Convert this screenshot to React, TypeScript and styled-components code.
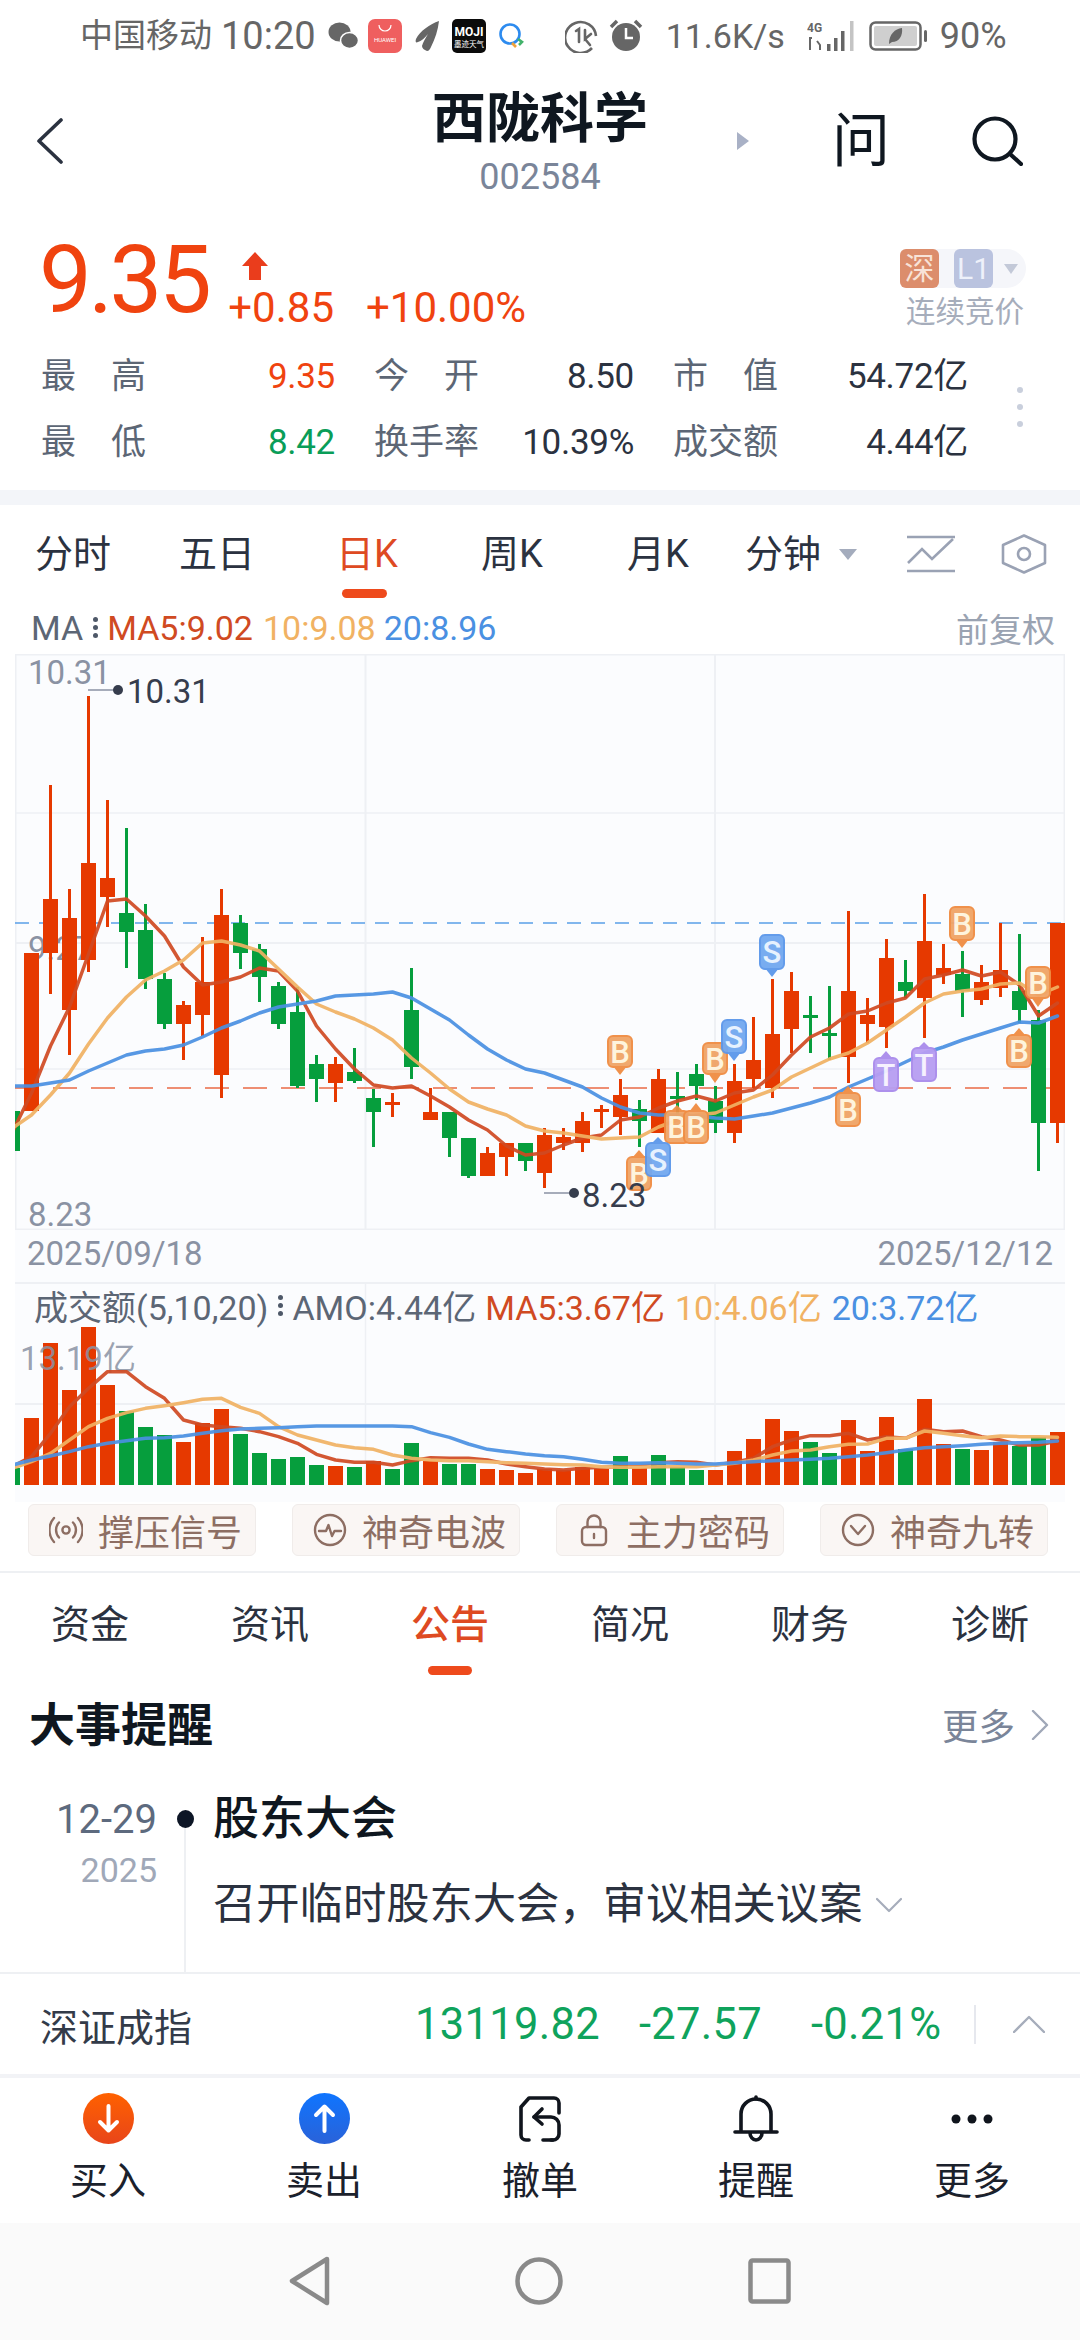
import React from "react";
import styled, { createGlobalStyle } from "styled-components";

const GlobalStyle = createGlobalStyle`
  html, body { margin: 0; padding: 0; background: #fff; }
  body { width: 1080px; height: 2340px; overflow: hidden; font-family: Roboto, "Noto Sans CJK SC", sans-serif; }
  * { box-sizing: border-box; }
`;

const RED = "#e63900";
const GREEN = "#069e3d";
const MA5 = "#d04a22";
const MA10 = "#f1b263";
const MA20 = "#4a90e2";

const Page = styled.div`
  width: 1080px;
  height: 2340px;
  display: flex;
  flex-direction: column;
  background: #fff;
  overflow: hidden;
`;

/* ---------- system status bar ---------- */
const StatusBar = styled.div`
  height: 72px;
  flex: none;
  display: flex;
  align-items: center;
  padding-left: 80px;
  color: #666;
`;
const StatusText = styled.span<{ $size?: number; $left?: number }>`
  font-size: ${(p) => p.$size ?? 33}px;
  line-height: 40px;
  margin-left: ${(p) => p.$left ?? 0}px;
  white-space: nowrap;
`;
const StatusIcon = styled.svg<{ $left: number }>`
  flex: none;
  margin-left: ${(p) => p.$left}px;
`;

/* ---------- stock title ---------- */
const Header = styled.div`
  height: 153px;
  flex: none;
  display: grid;
  grid-template-columns: 1fr 212px 1fr;
  align-items: start;
`;
const BackCell = styled.div`
  padding: 46px 0 0 36px;
`;
const TitleCell = styled.div`
  display: flex;
  flex-direction: column;
  align-items: center;
  padding-top: 19px;
`;
const StockName = styled.div`
  font-size: 54px;
  line-height: 58px;
  font-weight: 700;
  color: #0f1720;
  white-space: nowrap;
`;
const StockCode = styled.div`
  font-size: 36px;
  line-height: 40px;
  margin-top: 8px;
  color: #7a8599;
`;
const ActionCell = styled.div`
  display: flex;
  align-items: flex-start;
  padding: 40px 0 0 91px;
`;
const Caret = styled.div`
  width: 0;
  height: 0;
  margin-top: 20px;
  border-left: 12px solid #a9b1c6;
  border-top: 9px solid transparent;
  border-bottom: 9px solid transparent;
`;
const AskGlyph = styled.div`
  font-size: 58px;
  line-height: 58px;
  color: #0f1720;
  margin-left: 83px;
`;
const SearchWrap = styled.div`
  margin: 4px 0 0 81px;
`;

/* ---------- quote ---------- */
const QuoteTop = styled.div`
  height: 119px;
  flex: none;
  display: flex;
  padding-left: 39px;
  align-items: flex-start;
`;
const BigPrice = styled.div`
  font-size: 94px;
  line-height: 110px;
  letter-spacing: -3.5px;
  color: #f0430f;
`;
const ChangeBlock = styled.div`
  display: flex;
  flex-direction: column;
  margin-left: 20px;
  padding-top: 27px;
`;
const ChangeRow = styled.div`
  display: flex;
  gap: 32px;
  margin-top: 6px;
  font-size: 42px;
  line-height: 44px;
  color: #f0430f;
`;
const MarketBlock = styled.div`
  margin: 0 54px 0 auto;
  width: 126px;
  padding-top: 24px;
  display: flex;
  flex-direction: column;
`;
const BadgeRow = styled.div`
  display: flex;
  align-items: center;
  width: 126px;
  height: 39px;
  background: #f5f6fa;
  border-radius: 8px 20px 20px 8px;
`;
const Badge = styled.span<{ $bg: string; $fg: string }>`
  width: 39px;
  height: 39px;
  border-radius: 6px;
  background: ${(p) => p.$bg};
  color: ${(p) => p.$fg};
  font-size: 30px;
  line-height: 39px;
  text-align: center;
  margin-right: 15px;
`;
const BadgeCaret = styled.span`
  width: 0;
  height: 0;
  margin-left: -4px;
  border-top: 10px solid #c3c9d8;
  border-left: 7px solid transparent;
  border-right: 7px solid transparent;
`;
const MarketState = styled.div`
  font-size: 29.5px;
  line-height: 34px;
  margin: 7px 0 0 6px;
  color: #a6adbb;
  white-space: nowrap;
`;

const StatsWrap = styled.div`
  height: 146px;
  flex: none;
  display: flex;
  padding-left: 41px;
`;
const StatsGrid = styled.div`
  display: grid;
  grid-template-columns: 294px 260px 295px;
  grid-auto-rows: 66px;
  column-gap: 39px;
`;
const StatCell = styled.div`
  display: flex;
  justify-content: space-between;
  align-items: center;
  white-space: nowrap;
`;
const StatLabel = styled.span`
  width: 105px;
  font-size: 35px;
  line-height: 44px;
  color: #5c6675;
  text-align-last: justify;
`;
const StatValue = styled.span<{ $color?: string }>`
  font-size: 35px;
  line-height: 44px;
  letter-spacing: -0.3px;
  color: ${(p) => p.$color ?? "#2b3240"};
`;
const MoreDots = styled.div`
  display: flex;
  flex-direction: column;
  gap: 11px;
  margin: 43px 0 0 49px;
`;
const MoreDot = styled.span`
  width: 6px;
  height: 6px;
  border-radius: 50%;
  background: #c9cfdc;
`;

const Band = styled.div`
  height: 15px;
  flex: none;
  background: #f3f5f9;
`;

/* ---------- period tabs ---------- */
const PeriodTabs = styled.div`
  height: 100px;
  flex: none;
  display: grid;
  grid-template-columns: 146px 142px 158px 132px 160px 90px 79px 94px 46px;
  align-items: center;
  padding-bottom: 2px;
`;
const PeriodTab = styled.div<{ $active?: boolean }>`
  position: relative;
  text-align: center;
  font-size: 38px;
  line-height: 48px;
  color: ${(p) => (p.$active ? "#de4a22" : "#2b3240")};
  ${(p) =>
    p.$active &&
    `&::after {
      content: "";
      position: absolute;
      left: 50%;
      top: 59px;
      width: 45px;
      height: 9px;
      margin-left: -25px;
      border-radius: 5px;
      background: #ee4a1c;
    }`}
`;
const TabCaret = styled.div`
  width: 0;
  height: 0;
  margin-left: 11px;
  border-top: 11px solid #a4acbd;
  border-left: 9px solid transparent;
  border-right: 9px solid transparent;
`;

const LegendRow = styled.div`
  height: 49px;
  flex: none;
  display: flex;
  align-items: center;
  padding: 0 25px 4px 31px;
  font-size: 34px;
  white-space: nowrap;
`;
const LegendName = styled.span`
  color: #5c6675;
`;
const LegendDots = styled.span`
  display: inline-flex;
  flex-direction: column;
  gap: 3px;
  margin: 0 9px 0 10px;
`;
const LegendDot = styled.i`
  width: 5px;
  height: 5px;
  border-radius: 50%;
  background: #4e5868;
`;
const LegendValue = styled.span<{ $color: string; $left?: number }>`
  color: ${(p) => p.$color};
  margin-left: ${(p) => p.$left ?? 0}px;
`;
const Adjust = styled.span`
  margin-left: auto;
  font-size: 33px;
  color: #9aa3b2;
`;

/* ---------- charts ---------- */
const ChartFrame = styled.div`
  flex: none;
  width: 1050px;
  margin-left: 15px;
  background: #fbfcfe;
`;
const CandleSvg = styled.svg`
  display: block;
  font-family: Roboto, "Noto Sans CJK SC", sans-serif;
`;
const DateRow = styled.div`
  height: 52px;
  display: flex;
  justify-content: space-between;
  align-items: center;
  padding: 0 12px 6px 12px;
  font-size: 33px;
  color: #8a92a3;
`;
const VolumePanel = styled.div`
  position: relative;
  height: 220px;
`;
const VolumeLegend = styled.div`
  position: absolute;
  left: 19px;
  top: 1px;
  display: flex;
  align-items: center;
  height: 44px;
  font-size: 34px;
  white-space: nowrap;
`;

/* ---------- signal chips ---------- */
const ChipRow = styled.div`
  height: 71px;
  flex: none;
  display: flex;
  gap: 36px;
  padding: 2px 28px 0;
  border-bottom: 2px solid #eef0f3;
`;
const Chip = styled.div`
  width: 228px;
  height: 52px;
  display: flex;
  align-items: center;
  gap: 15px;
  padding-left: 20px;
  background: #faf6f4;
  border: 1px solid #f0ecea;
  border-radius: 6px;
  font-size: 36px;
  color: #8d6e63;
  white-space: nowrap;
`;

/* ---------- section tabs ---------- */
const SectionTabs = styled.div`
  height: 108px;
  flex: none;
  display: grid;
  grid-template-columns: repeat(6, 180px);
  padding-top: 28px;
`;
const SectionTab = styled.div<{ $active?: boolean }>`
  position: relative;
  text-align: center;
  font-size: 39px;
  line-height: 48px;
  height: 48px;
  color: ${(p) => (p.$active ? "#de4a22" : "#2b3240")};
  font-weight: ${(p) => (p.$active ? 500 : 400)};
  ${(p) =>
    p.$active &&
    `&::after {
      content: "";
      position: absolute;
      left: 50%;
      top: 65px;
      width: 44px;
      height: 9px;
      margin-left: -22px;
      border-radius: 5px;
      background: #ee4a1c;
    }`}
`;

const EventsHeader = styled.div`
  height: 86px;
  flex: none;
  display: flex;
  align-items: center;
  padding: 1px 31px 0 29px;
`;
const EventsTitle = styled.div`
  font-size: 46px;
  line-height: 52px;
  font-weight: 700;
  color: #0f1720;
`;
const EventsMore = styled.div`
  margin-left: auto;
  display: flex;
  align-items: center;
  gap: 16px;
  font-size: 36.5px;
  color: #7a8599;
`;

const EventRow = styled.div`
  height: 207px;
  flex: none;
  display: grid;
  grid-template-columns: 157px 56px 1fr;
  border-bottom: 2px solid #eef0f3;
`;
const EventDate = styled.div`
  display: flex;
  flex-direction: column;
  align-items: flex-end;
  padding-top: 29px;
`;
const EventDay = styled.div`
  font-size: 40px;
  line-height: 48px;
  color: #5d6a7e;
`;
const EventYear = styled.div`
  font-size: 34px;
  line-height: 40px;
  margin-top: 6px;
  color: #a0a8b8;
`;
const Timeline = styled.div`
  display: flex;
  flex-direction: column;
  align-items: center;
  padding-top: 43px;
`;
const TimelineDot = styled.span`
  width: 17px;
  height: 18px;
  border-radius: 50%;
  background: #0d1626;
  flex: none;
`;
const TimelineLine = styled.span`
  width: 2px;
  flex: 1;
  background: #eef0f3;
`;
const EventBody = styled.div`
  padding-top: 23px;
`;
const EventTitle = styled.div`
  font-size: 46px;
  line-height: 56px;
  font-weight: 500;
  color: #0f1720;
`;
const EventDesc = styled.div`
  display: flex;
  align-items: center;
  margin-top: 31px;
  font-size: 43.3px;
  line-height: 56px;
  color: #2b3240;
  white-space: nowrap;
`;

const IndexRow = styled.div`
  height: 104px;
  flex: none;
  display: flex;
  align-items: center;
  padding-left: 40px;
  border-bottom: 4px solid #f2f3f6;
  white-space: nowrap;
`;
const IndexName = styled.div`
  width: 375px;
  font-size: 38px;
  color: #333b49;
`;
const IndexFigure = styled.div<{ $width: number }>`
  width: ${(p) => p.$width}px;
  font-size: 43.5px;
  letter-spacing: 0.3px;
  color: #0fa35c;
`;
const IndexDivider = styled.div`
  width: 2px;
  height: 39px;
  background: #e6e8ee;
  margin-left: 27px;
`;
const IndexToggle = styled.div`
  margin-left: 37px;
  display: flex;
`;

/* ---------- trade actions ---------- */
const ActionBar = styled.div`
  height: 145px;
  flex: none;
  display: grid;
  grid-template-columns: repeat(5, 216px);
`;
const ActionItem = styled.div`
  display: flex;
  flex-direction: column;
  align-items: center;
  padding-top: 15px;
`;
const ActionIcon = styled.div`
  width: 51px;
  height: 51px;
  display: flex;
  align-items: center;
  justify-content: center;
`;
const ActionLabel = styled.div`
  margin-top: 13px;
  font-size: 38px;
  line-height: 48px;
  color: #1b212c;
`;

const NavBar = styled.div`
  flex: 1;
  display: flex;
  justify-content: center;
  align-items: flex-start;
  gap: 185px;
  padding-top: 33px;
  background: #fafafa;
`;

/* ---------- chart data: [colour, wick top, wick bottom, body top, body bottom] in page pixels ---------- */
type Candle = ["r" | "g", number, number, number, number];
const candles: Candle[] = [
  ["g", 1111, 1151, 1111, 1151], ["r", 953, 1111, 953, 1111], ["r", 785, 994, 899, 953], ["r", 889, 1055, 918, 1010],
  ["r", 696, 972, 863, 960], ["r", 800, 927, 878, 897], ["g", 828, 968, 913, 932], ["g", 904, 989, 930, 979],
  ["g", 973, 1029, 979, 1024], ["r", 1001, 1060, 1005, 1024], ["r", 937, 1036, 982, 1015], ["r", 889, 1098, 915, 1075],
  ["g", 915, 969, 923, 953], ["g", 944, 1002, 949, 977], ["g", 982, 1029, 986, 1024], ["g", 987, 1088, 1012, 1086],
  ["g", 1055, 1102, 1064, 1079], ["r", 1057, 1102, 1064, 1083], ["g", 1048, 1083, 1072, 1081], ["g", 1089, 1147, 1098, 1112],
  ["r", 1093, 1117, 1102, 1105], ["g", 968, 1079, 1010, 1067], ["r", 1088, 1120, 1112, 1120], ["g", 1112, 1157, 1112, 1138],
  ["g", 1138, 1178, 1138, 1176], ["r", 1147, 1176, 1153, 1176], ["r", 1143, 1176, 1143, 1157], ["g", 1143, 1171, 1143, 1161],
  ["r", 1128, 1188, 1135, 1173], ["r", 1128, 1150, 1137, 1143], ["r", 1112, 1152, 1121, 1143], ["r", 1105, 1128, 1109, 1112],
  ["r", 1079, 1135, 1095, 1117], ["g", 1100, 1147, 1109, 1121], ["r", 1069, 1133, 1079, 1133], ["g", 1072, 1117, 1096, 1099],
  ["g", 1064, 1100, 1074, 1086], ["g", 1086, 1133, 1101, 1123], ["r", 1064, 1143, 1081, 1133], ["r", 1017, 1088, 1060, 1079],
  ["r", 979, 1098, 1034, 1088], ["r", 972, 1053, 991, 1029], ["g", 996, 1053, 1015, 1017], ["g", 986, 1060, 1033, 1035],
  ["r", 911, 1083, 991, 1057], ["r", 998, 1043, 1015, 1024], ["r", 939, 1048, 958, 1027], ["g", 960, 998, 982, 991],
  ["r", 894, 1038, 941, 998], ["r", 944, 984, 968, 975], ["g", 951, 1017, 974, 991], ["r", 965, 1005, 982, 1000],
  ["r", 923, 997, 970, 988], ["g", 934, 1023, 991, 1010], ["g", 1010, 1171, 1020, 1123], ["r", 923, 1143, 923, 1123],
];

const ma5 = [1132,1093,1046,1007,954,901,899,916,936,967,985,982,977,968,971,991,1026,1049,1069,1085,1088,1086,1096,1107,1120,1130,1146,1155,1153,1145,1138,1135,1120,1117,1108,1101,1096,1101,1093,1090,1075,1055,1037,1028,1014,1011,1003,998,979,975,970,976,972,985,1016,1003];
const ma10 = [1128,1115,1095,1073,1044,1018,997,980,971,960,943,941,945,951,969,987,1004,1012,1019,1028,1040,1058,1073,1089,1102,1109,1115,1126,1131,1133,1136,1139,1138,1137,1127,1120,1115,1113,1105,1097,1090,1077,1068,1059,1053,1043,1030,1017,1003,994,991,989,984,983,995,987];
const ma20 = [1086,1086,1083,1080,1071,1063,1055,1051,1049,1045,1037,1028,1021,1013,1007,1004,1001,996,995,994,992,998,1009,1020,1035,1049,1060,1069,1073,1080,1087,1098,1107,1113,1115,1115,1116,1118,1119,1116,1113,1108,1103,1097,1087,1079,1071,1062,1053,1047,1040,1034,1028,1022,1023,1016];

const volumeHeights = [17,67,142,95,158,100,74,58,50,43,62,76,51,32,26,28,20,19,18,24,16,42,24,21,21,16,15,12,16,15,18,16,29,17,30,18,15,15,34,46,66,54,43,32,65,34,68,36,86,41,36,35,43,39,48,53];
const volumeUp = "0111110001110000010100100111111101000111110011101101100" + "1";

// Amount averages, measured at three units per pixel above y = 1270.
const amount5 = [590,560,490,410,355,305,305,350,385,450,465,470,475,485,500,520,553,570,577,577,585,572,563,565,565,570,582,590,597,600,595,592,590,585,578,575,577,585,577,565,530,510,497,497,490,510,500,505,478,485,483,500,510,525,525,513];
const amount10 = [595,575,550,510,470,445,428,415,407,398,388,385,412,430,470,495,510,525,533,538,555,565,570,572,572,575,578,580,582,584,585,590,592,592,590,590,590,585,580,570,555,543,540,530,523,522,505,505,483,490,497,503,498,500,500,502];
const amount20 = [585,570,558,545,530,520,512,505,503,498,490,482,477,475,473,470,468,468,468,468,468,470,488,502,522,538,545,552,557,560,568,577,580,580,578,580,582,582,578,575,572,570,568,565,560,555,548,540,533,530,527,523,520,518,517,513];

const slotX = (i: number) => 12.5 + 19 * i;
const linePoints = (ys: number[]) => ys.map((y, i) => `${slotX(i)},${y}`).join(" ");

type Marker = { x: number; tip: number; top: number; bottom: number; label: "B" | "S" | "T" };
const markers: Marker[] = [
  { x: 620, tip: 1075, top: 1036, bottom: 1067, label: "B" },
  { x: 848, tip: 1086, top: 1093, bottom: 1126, label: "B" },
  { x: 886, tip: 1051, top: 1058, bottom: 1091, label: "T" },
  { x: 924, tip: 1042, top: 1048, bottom: 1081, label: "T" },
  { x: 1019, tip: 1028, top: 1035, bottom: 1067, label: "B" },
  { x: 962, tip: 948, top: 907, bottom: 940, label: "B" },
  { x: 1038, tip: 1007, top: 967, bottom: 998, label: "B" },
  { x: 677, tip: 1105, top: 1111, bottom: 1143, label: "B" },
  { x: 696, tip: 1103, top: 1111, bottom: 1143, label: "B" },
  { x: 639, tip: 1150, top: 1157, bottom: 1190, label: "B" },
  { x: 658, tip: 1137, top: 1143, bottom: 1176, label: "S" },
  { x: 715, tip: 1083, top: 1043, bottom: 1074, label: "B" },
  { x: 734, tip: 1061, top: 1020, bottom: 1053, label: "S" },
  { x: 772, tip: 977, top: 935, bottom: 969, label: "S" },
];
const markerTheme = {
  B: { fill: "#f0a466", edge: "#f08c42", ink: "#fff4dc" },
  S: { fill: "#72a8f0", edge: "#5b97ea", ink: "#e6f2ff" },
  T: { fill: "#b79ef2", edge: "#a98bec", ink: "#f6f1ff" },
};

function TradeMarker({ x, tip, top, bottom, label }: Marker) {
  const t = markerTheme[label];
  const pointer = tip > bottom ? `${x - 7},${bottom - 1} ${x},${tip} ${x + 7},${bottom - 1}` : `${x - 7},${top + 1} ${x},${tip} ${x + 7},${top + 1}`;
  return (
    <g opacity={0.95}>
      <polygon points={pointer} fill={t.edge} />
      <rect x={x - 12} y={top} width={24} height={bottom - top} rx={5} fill={t.fill} stroke={t.edge} strokeWidth={2} />
      <text x={x} y={(top + bottom) / 2 + 11} fontSize={31} fontWeight={500} textAnchor="middle" fill={t.ink}>
        {label}
      </text>
    </g>
  );
}

function CandleChart() {
  return (
    <CandleSvg width={1050} height={576} viewBox="15 654 1050 576">
      <g stroke="#eef0f4" fill="none">
        <rect x={15.5} y={654.5} width={1049} height={575} strokeWidth={2} />
        <line x1={15} x2={1065} y1={813} y2={813} strokeWidth={1.5} />
        <line x1={15} x2={1065} y1={943} y2={943} strokeWidth={2} />
        <line x1={15} x2={1065} y1={1069} y2={1069} strokeWidth={1.5} />
        <line x1={365.5} x2={365.5} y1={654} y2={1230} strokeWidth={2} />
        <line x1={715} x2={715} y1={654} y2={1230} strokeWidth={2} />
      </g>
      <g fontSize={33} fill="#8a92a3">
        <text x={28} y={684}>10.31</text>
        <text x={28} y={960}>9.27</text>
        <text x={28} y={1226}>8.23</text>
      </g>
      <line x1={15} x2={1065} y1={923} y2={923} stroke="#5a9ee8" strokeWidth={1.5} strokeDasharray="14 10" />
      <line x1={15} x2={1065} y1={1088} y2={1088} stroke="#ea6a45" strokeWidth={1.5} strokeDasharray="24 14" />
      {candles.map(([c, wt, wb, bt, bb], i) => {
        const col = c === "r" ? RED : GREEN;
        const x = slotX(i);
        return (
          <g key={i} fill={col}>
            <rect x={x - 1.5} y={wt} width={3} height={wb - wt} />
            <rect x={x - 7.5} y={bt} width={15} height={Math.max(bb - bt, 3)} />
          </g>
        );
      })}
      <g fill="none" strokeWidth={3.5} strokeLinejoin="round" strokeLinecap="round" opacity={0.92}>
        <polyline points={linePoints(ma5)} stroke={MA5} />
        <polyline points={linePoints(ma10)} stroke={MA10} />
        <polyline points={linePoints(ma20)} stroke={MA20} />
      </g>
      {markers.map((m, i) => (
        <TradeMarker key={i} {...m} />
      ))}
      <line x1={88} x2={114} y1={690} y2={690} stroke="#8a92a3" strokeWidth={1.5} />
      <circle cx={118} cy={690} r={5} fill="#363d4d" />
      <text x={127} y={703} fontSize={33} fill="#363d4d">10.31</text>
      <line x1={544} x2={569} y1={1193} y2={1193} stroke="#8a92a3" strokeWidth={1.5} />
      <circle cx={574} cy={1193} r={5} fill="#363d4d" />
      <text x={582} y={1207} fontSize={33} fill="#363d4d">8.23</text>
    </CandleSvg>
  );
}

function VolumeChart() {
  const amountLine = (zs: number[]) => linePoints(zs.map((z) => 1270 + z / 3));
  return (
    <CandleSvg width={1050} height={220} viewBox="15 1282 1050 220">
      <g stroke="#eef0f4" fill="none" strokeWidth={1.5}>
        <line x1={15} x2={1065} y1={1283} y2={1283} strokeWidth={2} />
        <line x1={15} x2={1065} y1={1404} y2={1404} strokeWidth={2} />
        <line x1={365.5} x2={365.5} y1={1282} y2={1485} />
        <line x1={715} x2={715} y1={1282} y2={1485} />
      </g>
      {volumeHeights.map((h, i) => (
        <rect key={i} x={slotX(i) - 7.5} y={1485 - h} width={15} height={h} fill={volumeUp[i] === "1" ? RED : GREEN} />
      ))}
      <text x={20} y={1370} fontSize={33} fill="#8a92a3" fillOpacity={0.85}>13.19亿</text>
      <g fill="none" strokeWidth={3.5} strokeLinejoin="round" strokeLinecap="round" opacity={0.92}>
        <polyline points={amountLine(amount5)} stroke={MA5} />
        <polyline points={amountLine(amount10)} stroke={MA10} />
        <polyline points={amountLine(amount20)} stroke={MA20} />
      </g>
    </CandleSvg>
  );
}

const Dots3 = () => (
  <LegendDots>
    <LegendDot />
    <LegendDot />
    <LegendDot />
  </LegendDots>
);

const CHIP = "#8d6e63";
const chipIcons = [
  <svg width="34" height="34" viewBox="0 0 34 34" fill="none" stroke={CHIP} strokeWidth="2.4" strokeLinecap="round" key="a">
    <circle cx="17" cy="17" r="3.6" />
    <path d="M10 9.5a11 11 0 0 0 0 15M24 9.5a11 11 0 0 1 0 15M5 5a18 18 0 0 0 0 24M29 5a18 18 0 0 1 0 24" />
  </svg>,
  <svg width="34" height="34" viewBox="0 0 34 34" fill="none" stroke={CHIP} strokeWidth="2.4" strokeLinecap="round" strokeLinejoin="round" key="b">
    <circle cx="17" cy="17" r="15" />
    <path d="M6 18h7l2.5-6 3.5 11 2.5-5H28" />
  </svg>,
  <svg width="34" height="34" viewBox="0 0 34 34" fill="none" stroke={CHIP} strokeWidth="2.4" strokeLinecap="round" key="c">
    <rect x="5" y="14" width="24" height="18" rx="4" />
    <path d="M10.5 14V9a6.5 6.5 0 0 1 13 0v5M17 21v4" />
  </svg>,
  <svg width="34" height="34" viewBox="0 0 34 34" fill="none" stroke={CHIP} strokeWidth="2.4" strokeLinecap="round" strokeLinejoin="round" key="d">
    <circle cx="17" cy="17" r="15" />
    <path d="M10 13l7 8 7-8" />
  </svg>,
];
const chipNames = ["撑压信号", "神奇电波", "主力密码", "神奇九转"];

const stats: [string, string, string?][][] = [
  [["最高", "9.35", "#f0430f"], ["今开", "8.50"], ["市值", "54.72亿"]],
  [["最低", "8.42", "#0a9d58"], ["换手率", "10.39%"], ["成交额", "4.44亿"]],
];

const actionGlyphs = [
  <svg width="51" height="51" viewBox="0 0 51 51" key="buy">
    <defs>
      <linearGradient id="buyFill" x1="0" y1="0" x2="0" y2="1">
        <stop offset="0" stopColor="#ff6100" />
        <stop offset="1" stopColor="#e8451a" />
      </linearGradient>
    </defs>
    <circle cx="25.5" cy="25.5" r="25.5" fill="url(#buyFill)" />
    <path d="M25.5 13v24M17 29l8.500 8.500L34 29" fill="none" stroke="#fff" strokeWidth="4" strokeLinecap="round" strokeLinejoin="round" />
  </svg>,
  <svg width="51" height="51" viewBox="0 0 51 51" key="sell">
    <defs>
      <linearGradient id="sellFill" x1="0" y1="0" x2="0" y2="1">
        <stop offset="0" stopColor="#0f75ff" />
        <stop offset="1" stopColor="#2a62d8" />
      </linearGradient>
    </defs>
    <circle cx="25.5" cy="25.5" r="25.5" fill="url(#sellFill)" />
    <path d="M25.500 38V14M17 22l8.500-8.500L34 22" fill="none" stroke="#fff" strokeWidth="4" strokeLinecap="round" strokeLinejoin="round" />
  </svg>,
  <svg width="42" height="46" viewBox="0 0 42 46" fill="none" stroke="#10151d" strokeWidth="3.6" strokeLinecap="round" strokeLinejoin="round" key="undo">
    <path d="M10 44H7a5 5 0 0 1-5-5V11L10 2h25a5 5 0 0 1 5 5v10M34 44h-2" />
    <path d="M23 13l-8 8 8 7" />
    <path d="M15 21h17a8 8 0 0 1 8 8v9a6 6 0 0 1-6 6h-10" />
  </svg>,
  <svg width="46" height="48" viewBox="0 0 46 48" fill="none" stroke="#10151d" strokeWidth="3.6" strokeLinecap="round" strokeLinejoin="round" key="bell">
    <path d="M8 36V19a15 15 0 0 1 30 0v17" />
    <path d="M2 37h42M23 4V2M17 38a6 7 0 0 0 12 0" />
  </svg>,
  <svg width="42" height="10" viewBox="0 0 42 10" fill="#10151d" key="more">
    <circle cx="5" cy="5" r="4.500" />
    <circle cx="21" cy="5" r="4.500" />
    <circle cx="37" cy="5" r="4.500" />
  </svg>,
];

export default function App() {
  return (
    <Page>
      <GlobalStyle />
      <StatusBar>
        <StatusText>中国移动</StatusText>
        <StatusText $size={38} $left={9}>10:20</StatusText>
        <StatusIcon $left={12} width="31" height="30" viewBox="0 0 31 30" fill="#666">
          <ellipse cx="11.500" cy="11" rx="11" ry="9.500" />
          <ellipse cx="21.500" cy="19.500" rx="9" ry="8" stroke="#fff" strokeWidth="1.500" />
        </StatusIcon>
        <StatusIcon $left={9} width="34" height="34" viewBox="0 0 34 34">
          <rect width="34" height="34" rx="7" fill="#ef5f5f" />
          <path d="M11 6a6 6 0 0 0 12 0" fill="none" stroke="#fff" strokeWidth="1.200" />
          <text x="17" y="23" fontSize="6" fill="#fff" textAnchor="middle" fontFamily="Roboto">HUAWEI</text>
        </StatusIcon>
        <StatusIcon $left={12} width="26" height="30" viewBox="0 0 26 30" fill="#666">
          <path d="M25 0C16 3 6 10 2 18c-1 3 0 4 2 3 3-1 7-4 10-8-3 5-5 8-6 12 0 2 2 4 5 5 2 0 3-2 4-4 4-8 7-17 8-26z" />
        </StatusIcon>
        <StatusIcon $left={12} width="34" height="34" viewBox="0 0 34 34">
          <rect width="34" height="34" rx="5" fill="#0b0b0b" />
          <text x="17" y="17" fontSize="12" fill="#fff" textAnchor="middle" fontFamily="Roboto" fontWeight="700">MOJI</text>
          <text x="17" y="28" fontSize="7.500" fill="#fff" textAnchor="middle" fontFamily="Noto Sans CJK SC">墨迹天气</text>
        </StatusIcon>
        <StatusIcon $left={12} width="26" height="30" viewBox="0 0 26 30" fill="none" strokeWidth="2.600">
          <circle cx="12" cy="13" r="9.500" stroke="#2d8bef" />
          <path d="M14 22l4 4" stroke="#f2a23a" />
          <path d="M20 18l4 3-3 3" stroke="#43b36b" />
        </StatusIcon>
        <StatusIcon $left={41} width="33" height="34" viewBox="0 0 33 34" fill="none" stroke="#666" strokeWidth="2.600">
          <path d="M27 29A15.500 15.500 0 1 1 31 17" />
          <path d="M11 12l3-2v13M20 11v9l6-5M20 20l5 6" strokeLinecap="round" />
        </StatusIcon>
        <StatusIcon $left={11} width="34" height="34" viewBox="0 0 34 34">
          <circle cx="17" cy="18" r="14" fill="#666" />
          <path d="M17 9v10h7" stroke="#fff" strokeWidth="2.500" fill="none" />
          <path d="M2 8l6-6M32 8l-6-6" stroke="#666" strokeWidth="3.500" />
        </StatusIcon>
        <StatusText $size={34} $left={23}>11.6K/s</StatusText>
        <StatusIcon $left={22} width="50" height="32" viewBox="0 0 50 32">
          <text x="0" y="12" fontSize="12" fontWeight="700" fill="#666" fontFamily="Roboto">4G</text>
          <path d="M2 18h3M3 30V19M10 21l3 4v5" stroke="#666" strokeWidth="2" fill="none" />
          <g fill="#666">
            <rect x="20" y="24" width="3.500" height="7" />
            <rect x="27" y="18" width="3.500" height="13" />
            <rect x="34" y="11" width="3.500" height="20" />
          </g>
          <rect x="43" y="1" width="3.500" height="30" fill="#c4c4c4" />
        </StatusIcon>
        <StatusIcon $left={12} width="59" height="30" viewBox="0 0 59 30">
          <rect x="1.500" y="1.500" width="50" height="27" rx="5" fill="none" stroke="#666" strokeWidth="2.500" />
          <rect x="5" y="5" width="43" height="20" rx="2" fill="#cfcfcf" />
          <rect x="55" y="9" width="3" height="12" rx="1.500" fill="#666" />
          <path d="M20 23C20 13 26 8 33 7c1 8-3 14-10 14z" fill="#666" />
        </StatusIcon>
        <StatusText $size={36} $left={12}>90%</StatusText>
      </StatusBar>

      <Header>
        <BackCell>
          <svg width="28" height="46" viewBox="0 0 28 46" fill="none" stroke="#2b3240" strokeWidth="3.600" strokeLinecap="round" strokeLinejoin="round">
            <path d="M25 2L3 23l22 21" />
          </svg>
        </BackCell>
        <TitleCell>
          <StockName>西陇科学</StockName>
          <StockCode>002584</StockCode>
        </TitleCell>
        <ActionCell>
          <Caret />
          <AskGlyph>问</AskGlyph>
          <SearchWrap>
            <svg width="52" height="50" viewBox="0 0 52 50" fill="none" stroke="#0f1720" strokeWidth="4.200" strokeLinecap="round">
              <circle cx="24" cy="23" r="20.500" />
              <path d="M39 38l11 10" />
            </svg>
          </SearchWrap>
        </ActionCell>
      </Header>

      <QuoteTop>
        <BigPrice>9.35</BigPrice>
        <ChangeBlock>
          <svg width="28" height="28" viewBox="0 0 28 28" style={{ marginLeft: 13 }}>
            <path d="M14 0l13 14h-7v14H8V14H1z" fill="#ea3d1c" />
          </svg>
          <ChangeRow>
            <span>+0.85</span>
            <span>+10.00%</span>
          </ChangeRow>
        </ChangeBlock>
        <MarketBlock>
          <BadgeRow>
            <Badge $bg="#dc8d6c" $fg="#f8e3d8">深</Badge>
            <Badge $bg="#bac3df" $fg="#eef1fa">L1</Badge>
            <BadgeCaret />
          </BadgeRow>
          <MarketState>连续竞价</MarketState>
        </MarketBlock>
      </QuoteTop>

      <StatsWrap>
        <StatsGrid>
          {stats.flat().map(([label, value, color]) => (
            <StatCell key={label}>
              <StatLabel>{label}</StatLabel>
              <StatValue $color={color}>{value}</StatValue>
            </StatCell>
          ))}
        </StatsGrid>
        <MoreDots>
          <MoreDot />
          <MoreDot />
          <MoreDot />
        </MoreDots>
      </StatsWrap>
      <Band />

      <PeriodTabs>
        <PeriodTab>分时</PeriodTab>
        <PeriodTab>五日</PeriodTab>
        <PeriodTab $active>日K</PeriodTab>
        <PeriodTab>周K</PeriodTab>
        <PeriodTab>月K</PeriodTab>
        <PeriodTab>分钟</PeriodTab>
        <TabCaret />
        <svg width="48" height="38" viewBox="0 0 48 38" fill="none" stroke="#9aa2b4" strokeWidth="2.600">
          <path d="M0 2h48M0 36h48" />
          <path d="M1 28l14-14 10 10L46 4" />
        </svg>
        <svg width="46" height="40" viewBox="0 0 46 40" fill="none" stroke="#9aa2b4" strokeWidth="2.600" strokeLinejoin="round">
          <path d="M23 1.500L44 11v18L23 38.500 2 29V11z" />
          <circle cx="23" cy="20" r="6" />
        </svg>
      </PeriodTabs>

      <LegendRow>
        <LegendName>MA</LegendName>
        <Dots3 />
        <LegendValue $color={MA5}>MA5:9.02</LegendValue>
        <LegendValue $color={MA10} $left={10}>10:9.08</LegendValue>
        <LegendValue $color={MA20} $left={8}>20:8.96</LegendValue>
        <Adjust>前复权</Adjust>
      </LegendRow>

      <ChartFrame>
        <CandleChart />
        <DateRow>
          <span>2025/09/18</span>
          <span>2025/12/12</span>
        </DateRow>
        <VolumePanel>
          <VolumeChart />
          <VolumeLegend>
            <LegendName>成交额(5,10,20)</LegendName>
            <Dots3 />
            <LegendName>AMO:4.44亿</LegendName>
            <LegendValue $color={MA5} $left={9}>MA5:3.67亿</LegendValue>
            <LegendValue $color={MA10} $left={10}>10:4.06亿</LegendValue>
            <LegendValue $color={MA20} $left={10}>20:3.72亿</LegendValue>
          </VolumeLegend>
        </VolumePanel>
      </ChartFrame>

      <ChipRow>
        {chipNames.map((name, i) => (
          <Chip key={name}>
            {chipIcons[i]}
            {name}
          </Chip>
        ))}
      </ChipRow>

      <SectionTabs>
        <SectionTab>资金</SectionTab>
        <SectionTab>资讯</SectionTab>
        <SectionTab $active>公告</SectionTab>
        <SectionTab>简况</SectionTab>
        <SectionTab>财务</SectionTab>
        <SectionTab>诊断</SectionTab>
      </SectionTabs>

      <EventsHeader>
        <EventsTitle>大事提醒</EventsTitle>
        <EventsMore>
          更多
          <svg width="18" height="30" viewBox="0 0 18 30" fill="none" stroke="#a0a8b8" strokeWidth="2.400" strokeLinecap="round" strokeLinejoin="round">
            <path d="M2 1l14 14L2 29" />
          </svg>
        </EventsMore>
      </EventsHeader>

      <EventRow>
        <EventDate>
          <EventDay>12-29</EventDay>
          <EventYear>2025</EventYear>
        </EventDate>
        <Timeline>
          <TimelineDot />
          <TimelineLine />
        </Timeline>
        <EventBody>
          <EventTitle>股东大会</EventTitle>
          <EventDesc>
            召开临时股东大会，审议相关议案
            <svg width="26" height="16" viewBox="0 0 26 16" fill="none" stroke="#a6adbb" strokeWidth="2.200" strokeLinecap="round" strokeLinejoin="round" style={{ marginLeft: 14 }}>
              <path d="M1 2l12 12L25 2" />
            </svg>
          </EventDesc>
        </EventBody>
      </EventRow>

      <IndexRow>
        <IndexName>深证成指</IndexName>
        <IndexFigure $width={224}>13119.82</IndexFigure>
        <IndexFigure $width={172}>-27.57</IndexFigure>
        <IndexFigure $width={136}>-0.21%</IndexFigure>
        <IndexDivider />
        <IndexToggle>
          <svg width="32" height="18" viewBox="0 0 32 18" fill="none" stroke="#a6adbb" strokeWidth="2.400" strokeLinecap="round" strokeLinejoin="round">
            <path d="M1 17L16 2l15 15" />
          </svg>
        </IndexToggle>
      </IndexRow>

      <ActionBar>
        {["买入", "卖出", "撤单", "提醒", "更多"].map((label, i) => (
          <ActionItem key={label}>
            <ActionIcon>{actionGlyphs[i]}</ActionIcon>
            <ActionLabel>{label}</ActionLabel>
          </ActionItem>
        ))}
      </ActionBar>

      <NavBar>
        <svg width="41" height="50" viewBox="0 0 41 50" fill="none" stroke="#8a8a8a" strokeWidth="4.500" strokeLinejoin="round">
          <path d="M38 3L3 25l35 22z" />
        </svg>
        <svg width="48" height="50" viewBox="0 0 48 50" fill="none" stroke="#8a8a8a" strokeWidth="4.500">
          <circle cx="24" cy="25" r="21.500" />
        </svg>
        <svg width="43" height="46" viewBox="0 0 43 46" fill="none" stroke="#8a8a8a" strokeWidth="4.500" strokeLinejoin="round" style={{ marginTop: 2 }}>
          <rect x="2.500" y="2.500" width="38" height="41" rx="2" />
        </svg>
      </NavBar>
    </Page>
  );
}
